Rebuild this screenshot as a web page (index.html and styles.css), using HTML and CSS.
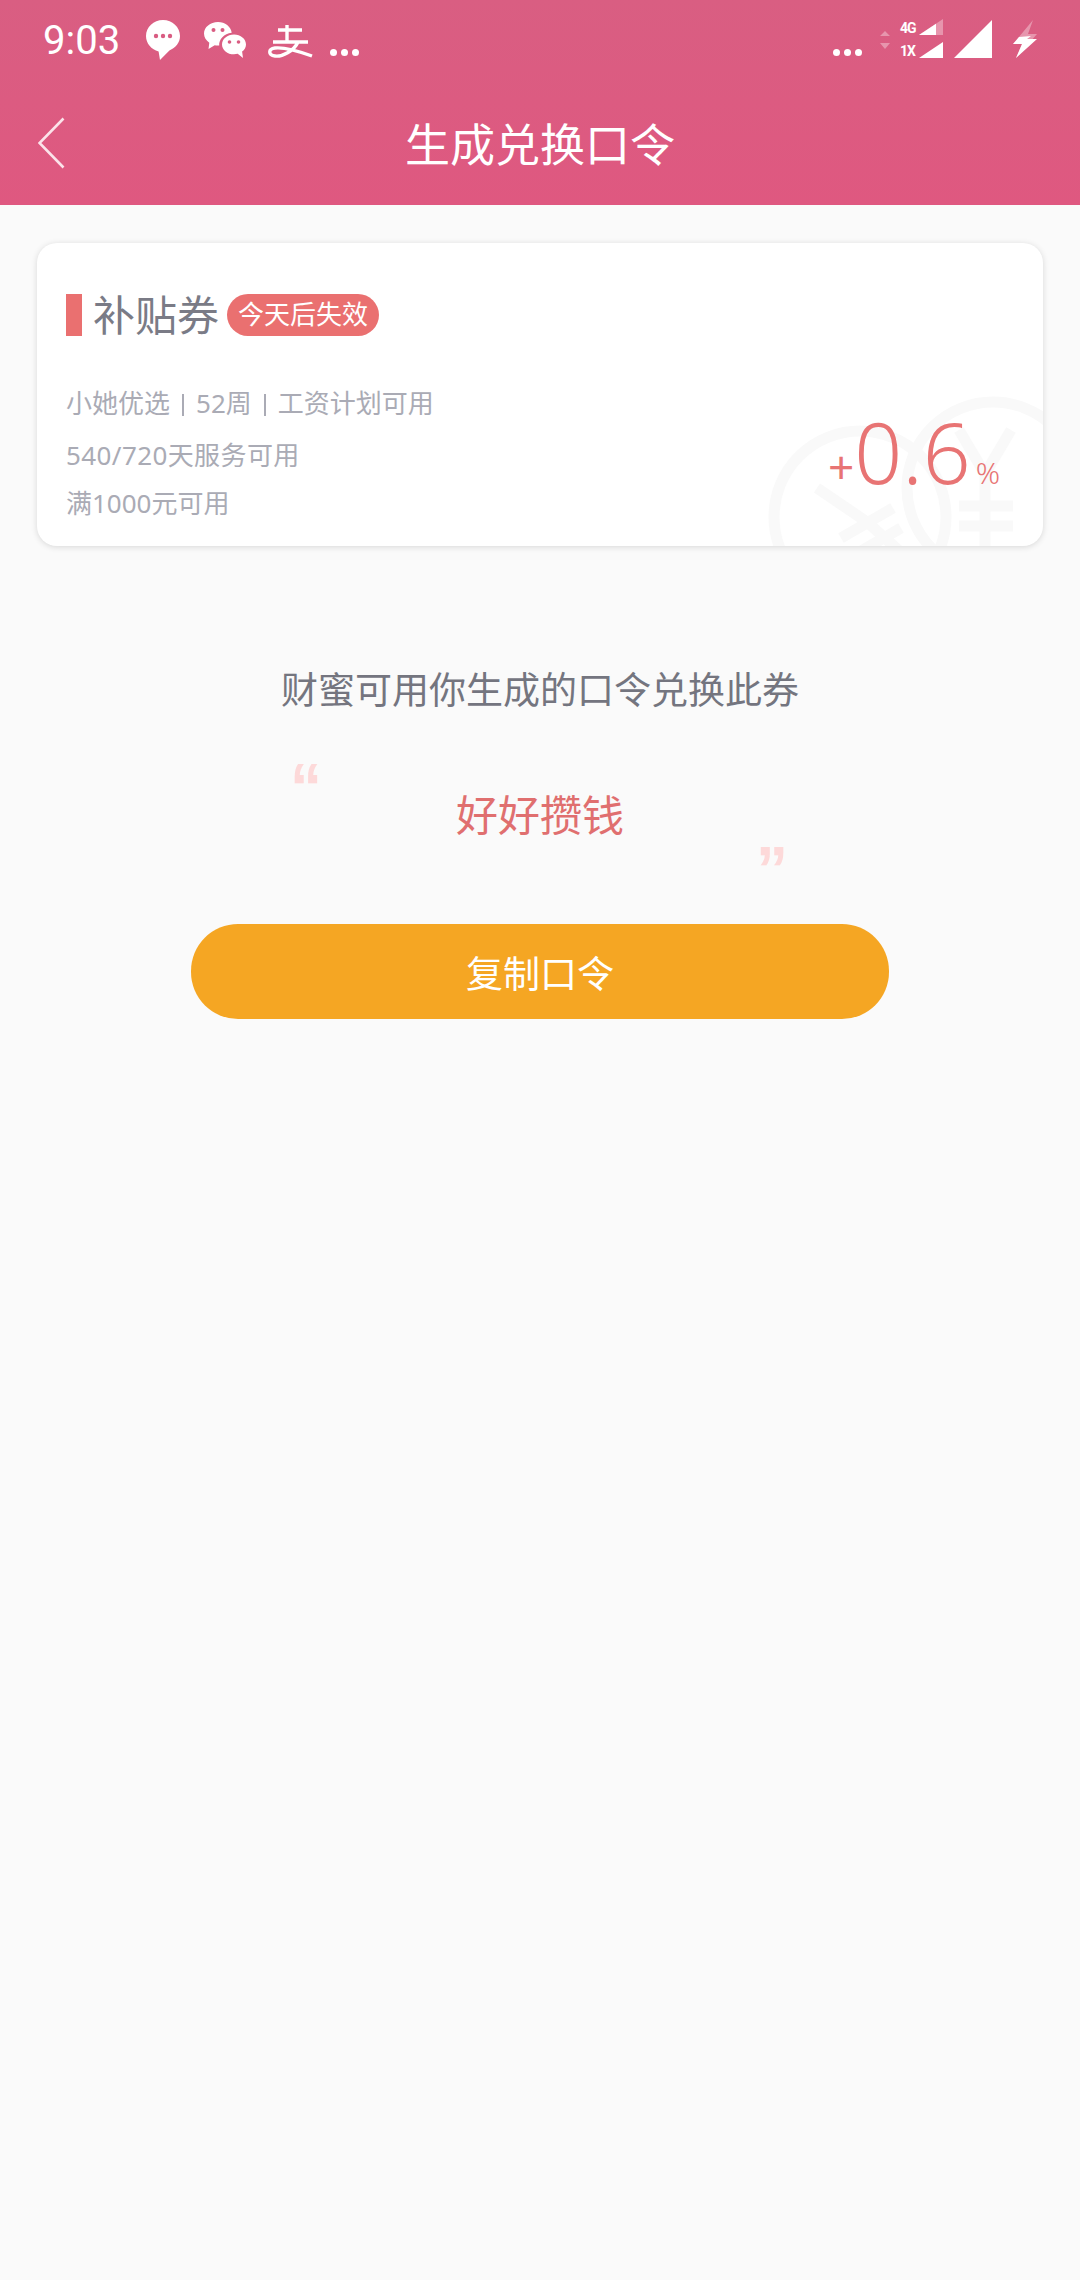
FILE: index.html
```html
<!DOCTYPE html>
<html lang="zh-CN">
<head>
    <meta charset="UTF-8">
    <meta name="viewport" content="width=device-width, initial-scale=1.0">
    <title>生成兑换口令</title>
    <link rel="stylesheet" href="styles.css">
</head>
<body>
    <div class="top">
        <div class="status-bar">
            <div class="status-left">
                <span class="time">9:03</span>
                <svg class="ic-msg" width="34" height="40" viewBox="0 0 34 40">
                    <path d="M17 0C7.600 0 0 7.200 0 16c0 7.600 5.400 13.600 12.600 15.400L14 40l9.400-9.600C29.600 28 34 22.600 34 16 34 7.200 26.400 0 17 0z" fill="#fff"/>
                    <circle cx="10" cy="16" r="2.200" fill="#d95c82"/>
                    <circle cx="17" cy="16" r="2.200" fill="#d95c82"/>
                    <circle cx="24" cy="16" r="2.200" fill="#d95c82"/>
                </svg>
                <svg class="ic-wechat" width="42" height="36" viewBox="0 0 42 36">
                    <path d="M14 0C6.300 0 0 5.200 0 11.600c0 3.700 2.100 7 5.300 9.100L4.500 27l6.200-3.700c1 .2 2 .3 3.100.3 1 0 1.400-.1 1.400-.1-.5-6 4.800-12 12.500-12.800C27 4.600 21 0 14 0z" fill="#fff"/>
                    <path d="M30 12.500c-6.600 0-12 4.400-12 9.900s5.400 9.900 12 9.900c1.300 0 2.500-.2 3.700-.5L39 36l-.9-6.400c2.400-1.800 3.900-4.400 3.900-7.200 0-5.500-5.400-9.900-12-9.900z" fill="#fff"/>
                    <circle cx="9.500" cy="8" r="2" fill="#d95c82"/>
                    <circle cx="18.500" cy="8" r="2" fill="#d95c82"/>
                    <circle cx="25.500" cy="20" r="1.800" fill="#d95c82"/>
                    <circle cx="34.500" cy="20" r="1.800" fill="#d95c82"/>
                </svg>
                <svg class="ic-alipay" width="46" height="34" viewBox="0 0 46 34">
                    <path d="M10 6H34M19 1V18M5 18H40M30 18C26 27 14 33 7 32C0 31 0 25 7 24C16 23 30 27 44 32" fill="none" stroke="#fff" stroke-width="3.400"/>
                </svg>
                <span class="dots"><i></i><i></i><i></i></span>
            </div>
            <div class="status-right">
                <span class="dots"><i></i><i></i><i></i></span>
                <svg class="ic-arrows" width="12" height="20" viewBox="0 0 12 20">
                    <path d="M6 0l5 5H1zM1 12h10l-5 6z" fill="#fff" opacity=".35"/>
                </svg>
                <div class="net">
                    <div class="net-row">
                        <span class="net-label">4G</span>
                        <svg width="24" height="16" viewBox="0 0 24 16">
                            <path d="M0 16L24 0v16z" fill="#fff" opacity=".35"/>
                            <path d="M0 16L17 4.700V16z" fill="#fff"/>
                        </svg>
                    </div>
                    <div class="net-row">
                        <span class="net-label">1X</span>
                        <svg width="24" height="16" viewBox="0 0 24 16">
                            <path d="M0 16L24 0v16z" fill="#fff"/>
                        </svg>
                    </div>
                </div>
                <svg class="ic-signal" width="38" height="38" viewBox="0 0 38 38">
                    <path d="M0 38L38 0v38z" fill="#fff"/>
                </svg>
                <svg class="ic-bolt" width="24" height="38" viewBox="0 0 24 38">
                    <path d="M20 0L0 24h9L3 38l21-24h-9z" fill="#fff" opacity=".35"/>
                    <path d="M0 24l6-7 12-1-4 3h10L3 38l6-14z" fill="#fff"/>
                </svg>
            </div>
        </div>
        <header class="nav">
            <svg class="back" width="27" height="52" viewBox="0 0 27 52">
                <path d="M25.500 1.500L1.500 26l24 24.500" fill="none" stroke="#fbe3ea" stroke-width="2.600"/>
            </svg>
            <h1>生成兑换口令</h1>
            <span></span>
        </header>
    </div>

    <section class="card">
        <svg class="coins" width="300" height="180" viewBox="0 0 300 180">
            <g fill="none" stroke="#f9f9f9" stroke-width="11">
                <circle cx="117" cy="151" r="86"/>
                <path d="M74 122l50 34M124 156l38 34M98 172l52-30M106 192l52-30"/>
                <circle cx="250" cy="122" r="86"/>
                <path d="M216 64l26 44 26-44M242 108v72M216 140h54M216 160h54"/>
            </g>
        </svg>
        <div class="card-info">
            <div class="card-title">
                <span class="mark"></span>
                <h2>补贴券</h2>
                <span class="badge">今天后失效</span>
            </div>
            <p class="scope first">小她优选<span class="sep"></span>52周<span class="sep"></span>工资计划可用</p>
            <p class="scope second">540/720天服务可用</p>
            <p class="scope">满1000元可用</p>
        </div>
        <div class="rate"><span class="plus">+</span><span class="num">0.6</span><span class="pct">%</span></div>
    </section>

    <main class="content">
        <p class="hint">财蜜可用你生成的口令兑换此券</p>
        <div class="code">
            <span class="quote open">“</span>
            <span class="code-text">好好攒钱</span>
            <span class="quote close">”</span>
        </div>
        <button class="copy-btn">复制口令</button>
    </main>
</body>
</html>
```

FILE: styles.css
```css
/* page */
body {
    margin: 0;
    width: 1080px;
    height: 2280px;
    overflow: hidden;
    background-color: #fafafa;
    font-family: 'Noto Sans', 'Noto Sans CJK SC', sans-serif;
}

h1, h2, p {
    margin: 0;
    font-weight: 400;
}

/* pink top area */
.top {
    height: 205px;
    background: linear-gradient(#d95e82, #df5880);
    color: #fff;
}

.status-bar {
    height: 80px;
    display: flex;
    justify-content: space-between;
    padding: 0 43px;
    box-sizing: border-box;
}

.status-left, .status-right {
    display: flex;
    align-items: flex-start;
}

.time {
    font-family: Roboto, sans-serif;
    font-size: 40px;
    line-height: 40px;
    margin-top: 21px;
    width: 103px;
}

.ic-msg { margin-top: 20px; }
.ic-wechat { margin: 22px 0 0 24px; }
.ic-alipay { margin: 24px 0 0 22px; }

.dots {
    display: flex;
    gap: 4px;
    margin: 49px 0 0 16px;
}

.dots i {
    width: 7px;
    height: 7px;
    border-radius: 50%;
    background-color: #fff;
}

.status-right .dots { margin: 49px 17px 0 0; }

.ic-arrows { margin: 31px 9px 0 0; }

.net {
    display: flex;
    flex-direction: column;
    gap: 7px;
    margin: 19px 11px 0 0;
}

.net-row {
    display: flex;
    align-items: flex-end;
    gap: 2px;
}

.net-label {
    width: 17px;
    font-family: Roboto, sans-serif;
    font-weight: 700;
    font-size: 14px;
    line-height: 14px;
    letter-spacing: -1px;
}

.ic-signal { margin: 20px 21px 0 0; }
.ic-bolt { margin: 20px 0 0 0; }

/* title bar */
.nav {
    height: 125px;
    display: grid;
    grid-template-columns: 1fr auto 1fr;
    align-items: center;
    padding: 0 38px;
    box-sizing: border-box;
}

.nav h1 {
    font-size: 45px;
    font-family: 'Noto Sans CJK SC', sans-serif;
}

/* coupon card */
.card {
    position: relative;
    height: 303px;
    margin: 38px 37px 0;
    padding: 51px 43px 0 29px;
    box-sizing: border-box;
    display: flex;
    justify-content: space-between;
    overflow: hidden;
    background-color: #fff;
    border-radius: 20px;
    box-shadow: 0 1px 6px rgba(0, 0, 0, 0.14);
}

.coins {
    position: absolute;
    right: 0;
    bottom: 0;
}

.card-info, .rate { position: relative; }

.card-title {
    display: flex;
    align-items: center;
    height: 42px;
}

.mark {
    width: 16px;
    height: 42px;
    background-color: #ea7070;
}

.card-title h2 {
    margin-left: 11px;
    font-size: 42px;
    line-height: 42px;
    color: #7a7b86;
}

.badge {
    margin-left: 8px;
    padding: 0 11px;
    height: 42px;
    line-height: 40px;
    font-size: 26px;
    color: #fff;
    background-color: #ea7070;
    border-radius: 21px;
}

.scope {
    font-size: 26px;
    line-height: 48px;
    color: #aaabb5;
}

.scope.first { margin-top: 43px; }
.scope.second { margin-top: 4px; letter-spacing: 0.4px; }

.sep {
    display: inline-block;
    width: 2px;
    height: 22px;
    margin: 0 12px;
    vertical-align: -3px;
    background-color: #aaabb5;
}

.rate {
    align-self: flex-end;
    margin-bottom: 52px;
    color: #e87474;
    line-height: 1;
    white-space: nowrap;
    font-weight: 300;
}

.plus { font-size: 46px; font-weight: 400; }
.num { font-size: 84px; }
.pct { font-size: 30px; margin-left: 5px; }

/* code block */
.content {
    display: flex;
    flex-direction: column;
    align-items: center;
}

.hint {
    margin-top: 112px;
    font-size: 37px;
    line-height: 60px;
    color: #74757f;
    font-family: 'Noto Sans CJK SC', sans-serif;
}

.code {
    position: relative;
    width: 500px;
    margin-top: 65px;
    text-align: center;
}

.code-text {
    font-size: 42px;
    line-height: 60px;
    color: #e06f6f;
    font-family: 'Noto Sans CJK SC', sans-serif;
}

.quote {
    position: absolute;
    font-family: 'Liberation Sans', sans-serif;
    font-weight: 700;
    font-size: 64px;
    line-height: 64px;
    color: #fdd9d9;
}

.quote.open { left: 0; top: -28px; }
.quote.close { right: 2px; top: 55px; }

.copy-btn {
    width: 698px;
    height: 95px;
    margin-top: 81px;
    border: none;
    border-radius: 47px;
    background-color: #f5a623;
    color: #fff;
    font-size: 37px;
    font-family: 'Noto Sans CJK SC', sans-serif;
}
```
